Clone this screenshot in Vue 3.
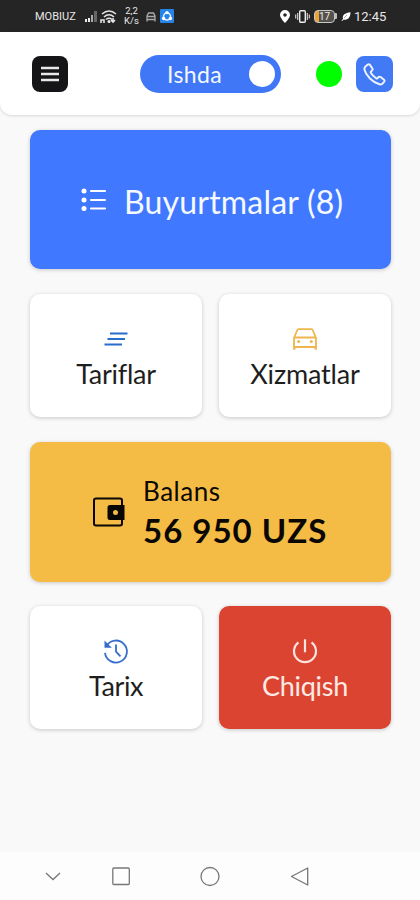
<script setup>
const dataRate = ['2,2', 'K/s']
</script>

<template>
  <div class="screen">
    <div class="status">
      <span class="carrier">MOBIUZ</span>
      <svg class="signal" viewBox="0 0 14 14"><path d="M1 13v-3h2v3zM4 13V9h2v4z" fill="#eee" /><path d="M7 13V6h2v7z" fill="#aaa" /><path d="M10 13V2h3v11z" fill="#666" /></svg>
      <svg class="wifi" viewBox="0 0 18 15"><g fill="none" stroke="#e4e4e4" stroke-width="1.6"><path d="M2 5q7-6 14 0M4 8q5-4.500 10 0M6 10.500q3-2.500 6 0" /><path d="M1 14v-3h3v3M13 9v4m-2-2 2 2 2-2" /></g><circle cx="9" cy="12.500" r="1.500" fill="#eee" /></svg>
      <span class="rate"><span v-for="r in dataRate" :key="r">{{ r }}</span></span>
      <svg class="mini-car" viewBox="0 0 12 12"><path d="M2 10.500V5L3.500 2h5L10 5v5.500M2 5.500h8M2 8.500h8" fill="none" stroke="#aaa" stroke-width="1.300" /></svg>
      <svg class="app-badge" viewBox="0 0 14 14"><rect width="14" height="14" rx="1" fill="#2583e9" /><circle cx="7" cy="7.500" r="3.500" fill="none" stroke="#d9edff" stroke-width="1.600" /><g fill="#fff"><circle cx="7" cy="3.600" r="1.700" /><circle cx="3.600" cy="9.500" r="1.700" /><circle cx="10.400" cy="9.500" r="1.700" /></g></svg>
      <span class="spacer"></span>
      <svg class="pin" viewBox="0 0 10 13"><path fill-rule="evenodd" d="M5 0a5 5 0 0 0-5 5c0 3 5 8 5 8s5-5 5-8a5 5 0 0 0-5-5zm0 3.200a1.800 1.800 0 1 1 0 3.600 1.800 1.800 0 0 1 0-3.600z" fill="#fff" /></svg>
      <svg class="vibrate" viewBox="0 0 15 13"><rect x="4.700" y=".8" width="5.600" height="11.400" rx="1" fill="none" stroke="#eee" stroke-width="1.400" /><path d="M2.700 3v7M.7 4.500v4M12.300 3v7M14.300 4.500v4" stroke="#ddd" stroke-width="1.100" /></svg>
      <span class="battery"><span class="cell">17</span></span>
      <svg class="leaf" viewBox="0 0 10 9"><path d="M.5 8.500 2 7C1 3 4 1 9.500.3 9.500 5 7 8.500 3 7.500L1 9z" fill="#fff" /><path d="m3 6 3-3" stroke="#666" stroke-width=".6" /></svg>
      <span class="time">12:45</span>
    </div>

    <header class="header">
      <button class="menu" aria-label="Menyu">
        <svg viewBox="0 0 36 36"><path d="M9 12h18M9 18h18M9 24h18" stroke="#e8e8e8" stroke-width="2.400" /></svg>
      </button>
      <button class="toggle"><span class="toggle-text">Ishda</span><i class="knob"></i></button>
      <i class="online"></i>
      <button class="call" aria-label="Telefon">
        <svg viewBox="0 0 36 36"><path d="M9.200 10.200 11.500 8.300Q12.700 7.500 13.700 8.900L16 12.200Q16.700 13.300 15.600 14.200L14.500 15.200Q14 15.700 14.400 16.400 16.200 19.500 19.600 21.700 20.300 22.100 20.800 21.600L22 20.500Q22.900 19.700 23.900 20.500L27.300 23.100Q28.200 24 27.500 24.900L25.800 26.900Q24.800 28 22.900 27.500C16.200 25.700 9.500 19 8.200 13.200Q7.900 11.400 9.200 10.200Z" fill="none" stroke="#eef4ff" stroke-width="1.900" stroke-linejoin="round" /></svg>
      </button>
    </header>

    <main class="content">
      <section class="card orders">
        <svg class="list-icon" viewBox="0 0 26 24"><g fill="#fff"><circle cx="3" cy="3" r="2.500" /><circle cx="3" cy="12" r="2.500" /><circle cx="3" cy="20.500" r="2.500" /></g><path d="M10 3h14M10 12h14M10 20.500h14" stroke="#fff" stroke-width="2.100" stroke-linecap="round" /></svg>
        <span class="orders-text">Buyurtmalar (8)</span>
      </section>
      <div class="row">
        <section class="card tile">
          <svg class="tile-icon" viewBox="0 0 26 26"><path d="M7 7.500h17.500M4.500 13H22M1.500 18.500h17.500" stroke="#286dcc" stroke-width="2" /></svg>
          <span class="label tariffs">Tariflar</span>
        </section>
        <section class="card tile">
          <svg class="tile-icon" viewBox="0 0 26 26"><g fill="none" stroke="#eeb64d" stroke-width="1.800" stroke-linejoin="round"><path d="M2 23.500V12L5.300 4q.3-.9 1.200-.9h13q.9 0 1.200.9L24 12v11.500M2 11.500h22M2 21h22M2.500 23.800V21M23.500 23.800V21" /></g><g fill="#eeb64d"><circle cx="6.700" cy="15.600" r="1.500" /><circle cx="19.300" cy="15.600" r="1.500" /></g></svg>
          <span class="label services">Xizmatlar</span>
        </section>
      </div>
      <section class="card balance">
        <svg class="wallet" viewBox="0 0 34 34"><path d="M30 9V4.500Q30 2.500 28 2.500H4Q2 2.500 2 4.500v23q0 2 2 2h24q2 0 2-2V24" fill="none" stroke="#080704" stroke-width="2" /><path fill-rule="evenodd" d="M18 9h14.500v15H18q-2.500 0-2.500-2.500v-10Q15.500 9 18 9zm5.500 5a2.500 2.500 0 1 0 0 5 2.500 2.500 0 0 0 0-5z" fill="#080704" /></svg>
        <div class="figures">
          <span class="caption">Balans</span>
          <strong class="amount">56 950 UZS</strong>
        </div>
      </section>
      <div class="row last">
        <section class="card tile">
          <svg class="tile-icon" viewBox="0 0 26 26"><g fill="none" stroke="#376dcc" stroke-width="1.800"><path d="M3.300 8.200A11 11 0 1 1 2 14.800M13 6.500v7.200l4.500 4.600" /></g><path d="M1.500 2.500v7.300h7.300z" fill="#376dcc" /></svg>
          <span class="label history">Tarix</span>
        </section>
        <section class="card tile exit">
          <svg class="tile-icon" viewBox="0 0 26 26"><path d="M13 1.200v13M6.500 4.300a11 11 0 1 0 13 0" fill="none" stroke="#ffe4df" stroke-width="2.200" /></svg>
          <span class="label leave">Chiqish</span>
        </section>
      </div>
    </main>

    <nav class="system">
      <svg viewBox="0 0 18 20"><path d="m2 7 7 6.500L16 7" /></svg>
      <svg viewBox="0 0 18 20"><rect x=".8" y="2" width="16.500" height="16.500" rx="1" /></svg>
      <svg viewBox="0 0 18 20"><circle cx="9" cy="10.500" r="9" /></svg>
      <svg viewBox="0 0 18 20"><path d="M16.700 2v17L.5 10.500z" stroke-linejoin="round" /></svg>
    </nav>
  </div>
</template>

<style>
body { background: #f9f9f9; }
</style>

<style scoped>
* { box-sizing: border-box; }
.screen { width: 420px; height: 900px; display: flex; flex-direction: column; background: #f9f9f9; font-family: Lato, "Liberation Sans", sans-serif; font-variant-ligatures: none; overflow: hidden; }
svg { display: block; flex: none; overflow: visible; }
button { border: 0; padding: 0; font: inherit; }
span { white-space: nowrap; }
.status { height: 32px; flex: none; background: #252525; color: #e8e8e8; display: flex; align-items: center; padding: 0 33px 0 35px; font-family: Roboto, sans-serif; }
.carrier { width: 42px; font-size: 11px; line-height: 12px; padding-top: 2px; }
.signal { width: 14px; height: 14px; margin: 0 2px 0 7px; }
.wifi { width: 18px; height: 15px; }
.rate { width: 15px; margin-left: 6px; font-size: 9.500px; line-height: 10px; text-align: center; display: flex; flex-direction: column; align-items: center; }
.mini-car { width: 12px; height: 12px; margin: 1px 3px 0 6px; }
.app-badge { width: 14px; height: 14px; margin-right: 2px; }
.spacer { flex: 1; }
.pin { width: 10px; height: 13px; }
.vibrate { width: 15px; height: 13px; margin: 0 4px 0 5px; }
.battery { display: flex; align-items: center; }
.battery::after { content: ''; width: 2px; height: 6px; background: #bbb; border-radius: 0 1px 1px 0; }
.cell { width: 21px; height: 13px; border: 1.500px solid #c8c8c8; border-radius: 4px; background: linear-gradient(90deg, #eda334 0 4px, #55514d 4px); color: #eee; font-size: 10px; line-height: 11px; text-align: center; }
.leaf { width: 10px; height: 9px; margin: 0 3px 0 4px; }
.time { width: 33px; font-size: 13px; line-height: 14px; padding-top: 1px; }
.header { height: 83px; flex: none; background: #fff; border-radius: 0 0 12px 12px; box-shadow: 0 1px 3px #0002; display: flex; align-items: center; padding: 0 27px 0 32px; }
.menu, .call { width: 36px; height: 36px; border-radius: 8px; flex: none; }
.menu { background: #151517; }
.call { width: 37px; background: #4279f5; margin-left: 14px; }
.toggle { width: 141px; height: 38px; margin-left: 72px; padding: 0 6px 0 27px; border-radius: 19px; background: #4077f6; color: #f4f8ff; display: flex; align-items: center; justify-content: space-between; }
.toggle-text { font-size: 23px; line-height: 28px; letter-spacing: .4px; }
.knob { width: 26px; height: 26px; border-radius: 50%; background: #fff; }
.online { width: 26px; height: 26px; border-radius: 50%; background: #00fd00; margin-left: 35px; }
.content { flex: 1; padding: 15px 29px 0 30px; }
.card { border-radius: 10px; box-shadow: 0 1px 4px #0003; display: flex; }
.orders { height: 139px; background: #4079ff; color: #f6f9ff; align-items: center; padding: 5px 0 0 51px; }
.list-icon { width: 26px; height: 24px; margin-top: -5px; }
.orders-text { margin-left: 17px; font-size: 32px; line-height: 40px; letter-spacing: .2px; }
.row { display: grid; grid-template-columns: 172px 172px; gap: 17px; margin: 25px 0; }
.row.last { margin-top: 24px; }
.tile { height: 123px; background: #fff; color: #1e1e1e; flex-direction: column; align-items: center; padding-top: 32px; }
.tile-icon { width: 26px; height: 26px; }
.label { margin-top: 5px; font-size: 27px; line-height: 34px; }
.tariffs { letter-spacing: -.25px; }
.services { letter-spacing: -.15px; }
.history { letter-spacing: -.4px; }
.leave { letter-spacing: -.3px; }
.balance { height: 140px; background: #f4bb45; color: #0a0804; align-items: center; padding-left: 62px; }
.wallet { width: 34px; height: 34px; margin-top: 2px; }
.figures { margin-left: 17px; display: flex; flex-direction: column; }
.caption { font-size: 26px; line-height: 36px; letter-spacing: .55px; }
.amount { font-size: 33px; line-height: 42px; white-space: nowrap; letter-spacing: 1px; }
.exit { background: #db4430; color: #ffeae5; }
.system { height: 48px; flex: none; background: #fdfdfd; display: flex; align-items: center; padding-left: 44px; }
.system svg { width: 18px; height: 20px; fill: none; stroke: #777; stroke-width: 1.300; }
.system svg:nth-child(2) { margin-left: 50px; }
.system svg:nth-child(3) { margin-left: 71px; }
.system svg:nth-child(4) { margin-left: 72px; }
</style>
